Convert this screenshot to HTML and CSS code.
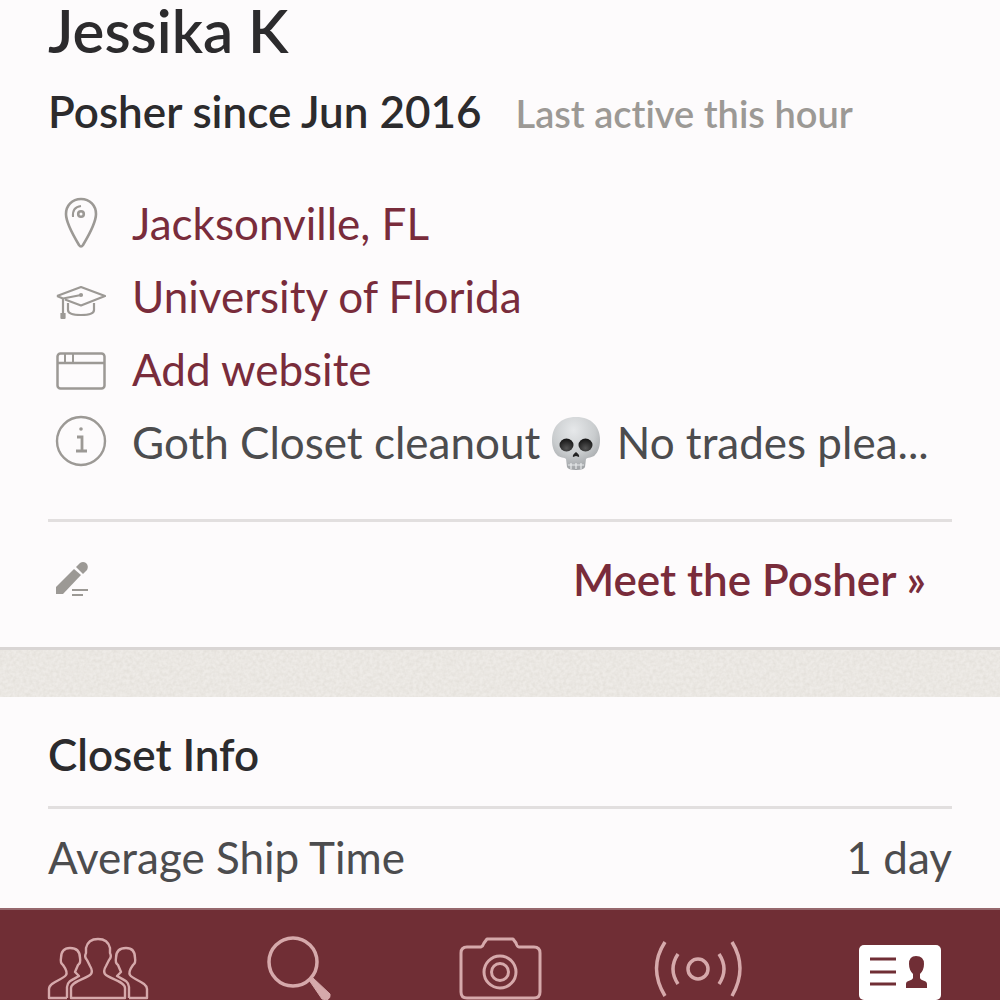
FILE: index.html
```html
<!DOCTYPE html>
<html lang="en">
<head>
    <meta charset="UTF-8">
    <meta name="viewport" content="width=device-width, initial-scale=1.0">
    <title>Jessika K</title>
    <link rel="stylesheet" href="styles.css">
</head>
<body>

    <main>
        <section class="profile">
            <h1>Jessika K</h1>
            <div class="since">
                <h2>Posher since Jun 2016</h2>
                <span class="active">Last active this hour</span>
            </div>

            <ul class="details">
                <li>
                    <svg class="icon" viewBox="0 0 66 60" fill="none" stroke="#9c9995" stroke-width="2.600">
                        <path d="M33 6C24 6 18 12.500 18 21C18 30 25 42 31 52Q33 55 35 52C41 42 48 30 48 21C48 12.500 42 6 33 6Z"/>
                        <circle cx="33" cy="21" r="2.800"/>
                        <path d="M25 24Q24 14 33 13" stroke-width="2"/>
                    </svg>
                    <a href="#">Jacksonville, FL</a>
                </li>
                <li>
                    <svg class="icon" viewBox="0 0 66 60" fill="none" stroke="#9c9995" stroke-width="2.200" stroke-linejoin="round">
                        <path d="M9 30L33 21L57 30L33 39.500L17 33.500M9 30L15 32.500L33 29"/>
                        <path d="M15 32V51M13.500 47V52H16.500V47"/>
                        <path d="M20 37V44Q20 49 33 49Q46 49 46 44V37"/>
                        <circle cx="33" cy="29" r="1"/>
                    </svg>
                    <a href="#">University of Florida</a>
                </li>
                <li>
                    <svg class="icon" viewBox="0 0 66 60" fill="none" stroke="#9c9995" stroke-width="2.500">
                        <rect x="9.500" y="14.500" width="47" height="35" rx="3"/>
                        <path d="M9 24H57"/>
                        <path d="M17 15V24M25 15V24" stroke-width="2"/>
                    </svg>
                    <a href="#">Add website</a>
                </li>
                <li>
                    <svg class="icon" viewBox="0 0 66 60" fill="none" stroke="#9c9995" stroke-width="2.400">
                        <circle cx="33" cy="29" r="24"/>
                        <path d="M29 25H34V39M28 39H39" stroke-width="2.800"/>
                        <circle cx="33" cy="17" r="1.800" fill="#9c9995" stroke="none"/>
                    </svg>
                    <p class="bio">Goth Closet cleanout
                        <svg class="skull" viewBox="0 0 54 56">
                            <defs>
                                <radialGradient id="bone" cx=".45" cy=".25" r=".75">
                                    <stop offset="0" stop-color="#e6e8ea"/>
                                    <stop offset=".6" stop-color="#c9ccce"/>
                                    <stop offset="1" stop-color="#9fa2a5"/>
                                </radialGradient>
                                <radialGradient id="socket" cx=".5" cy=".75" r=".7">
                                    <stop offset="0" stop-color="#555"/>
                                    <stop offset="1" stop-color="#171717"/>
                                </radialGradient>
                            </defs>
                            <path d="M25 2C9 2 1 12 1 25C1 32 3 37 6 40C8 43 14 42 15 44L16 52Q17 55 25 55Q33 55 34 52L35 44C36 42 42 43 44 40C47 37 49 32 49 25C49 12 41 2 25 2Z" fill="url(#bone)"/>
                            <ellipse cx="15.500" cy="30" rx="7" ry="6.500" fill="url(#socket)"/>
                            <ellipse cx="34.500" cy="30" rx="7" ry="6.500" fill="url(#socket)"/>
                            <path d="M25 37Q21 40 22 42L25 41L28 42Q29 40 25 37Z" fill="#222"/>
                            <path d="M17 50H33M20 48V54M25 48V54M30 48V54" stroke="#e8eaec" stroke-width="1.200"/>
                        </svg>
                        No trades plea...</p>
                </li>
            </ul>

            <div class="actions">
                <button class="edit" aria-label="Edit profile">
                    <svg viewBox="0 0 34 36" fill="#9c9995">
                        <path d="M0 26L18 8L25 14L7 33H0Z"/>
                        <path d="M20 6L24 2Q27 0 30 2Q33 5 31 9L27 13Z"/>
                        <path d="M16 28H32V30H16ZM16 33H27V35H16Z"/>
                    </svg>
                </button>
                <a class="meet" href="#">Meet the Posher »</a>
            </div>
        </section>

        <div class="paper">
            <svg width="100%" height="100%">
                <filter id="grain">
                    <feTurbulence type="fractalNoise" baseFrequency="0.3" numOctaves="2"/>
                    <feColorMatrix values="0 0 0 0 .5  0 0 0 0 .47  0 0 0 0 .4  .35 0 0 0 -.1"/>
                </filter>
                <rect width="100%" height="100%" filter="url(#grain)"/>
            </svg>
        </div>

        <section class="closet">
            <h2>Closet Info</h2>
            <dl>
                <dt>Average Ship Time</dt>
                <dd>1 day</dd>
            </dl>
        </section>
    </main>

    <nav class="tabs">
        <a href="#" aria-label="Feed">
            <svg viewBox="0 0 110 66" fill="none" stroke="#d6a9ab" stroke-width="2.400" stroke-linejoin="round">
                <path d="M26 62V52C26 45 42 43 46 38Q48 35 45 30L42 24Q39 21 41 17V12Q43 3 53 3Q63 3 65 12V17Q67 21 64 24L61 30Q58 35 60 38C64 43 80 45 80 52V62Z"/>
                <path d="M22 62V51C22 45 29 43 34 40L30 36L33 29Q36 27 35 22Q35 12 25 12Q16 12 16 22Q15 27 18 29Q23 36 21 39C18 44 4 46 4 53V62H22"/>
                <path d="M84 62V51C84 45 77 43 72 40L76 36L73 29Q70 27 71 22Q71 12 81 12Q90 12 90 22Q91 27 88 29Q83 36 85 39C88 44 102 46 102 53V62H84"/>
            </svg>
        </a>
        <a href="#" aria-label="Search">
            <svg viewBox="0 0 110 66" fill="none" stroke="#d6a9ab">
                <circle cx="48" cy="26" r="24" stroke-width="3.500"/>
                <path d="M64 44L68 42L85 58Q86 62 82 64L77 63Z" fill="#d6a9ab"/>
            </svg>
        </a>
        <a href="#" aria-label="Sell">
            <svg viewBox="0 0 110 66" fill="none" stroke="#d6a9ab" stroke-width="3" stroke-linejoin="round">
                <path d="M16 17Q16 11 22 11H36Q38 10 39 7L42 3H68L71 7Q72 11 74 11H89Q95 11 95 17V56Q95 62 89 62H22Q16 62 16 56Z"/>
                <circle cx="55" cy="36" r="16"/>
                <circle cx="55" cy="36" r="8.500"/>
            </svg>
        </a>
        <a href="#" aria-label="News">
            <svg viewBox="0 0 110 66" fill="none" stroke="#d6a9ab" stroke-width="3.500">
                <circle cx="53" cy="33" r="10"/>
                <path d="M33 18Q23 33 33 48M74 18Q84 33 74 48"/>
                <path d="M20 6Q3 32 20 60M87 6Q103 32 87 60"/>
            </svg>
        </a>
        <a href="#" aria-label="Account">
            <svg viewBox="0 0 110 66">
                <rect x="14" y="9" width="82" height="55" rx="5" fill="#fff"/>
                <path d="M25 23H51M25 36H51M25 48H51" stroke="#702e35" stroke-width="3"/>
                <path d="M71 20Q79 20 79 28Q79 34 75 38V42C76 45 82 44 82 48V52H61V48C61 44 67 45 68 42V38Q64 34 64 28Q64 20 71 20Z" fill="#702e35"/>
            </svg>
        </a>
    </nav>

</body>
</html>
```
FILE: styles.css
```css
* {
    box-sizing: border-box;
}
body {
    margin: 0;
    background: #fdfbfc;
    color: #4c4c4e;
    font-family: Lato, "Open Sans", sans-serif;
    font-size: 44px;
    font-variant-ligatures: none;
    line-height: 48px;
}
main {
    padding-bottom: 92px;
}
h1, h2, p, ul, dl, dd {
    margin: 0;
    padding: 0;
}
h1, h2 {
    color: #2c2b2d;
    font-size: 44px;
    font-weight: 600;
}
h1 {
    font-size: 60px;
    line-height: 60px;
}
a {
    color: #792c3b;
    text-decoration: none;
}
.profile {
    padding: 0 48px;
    border-bottom: 3px solid #d9d5d4;
}
.since {
    display: flex;
    align-items: baseline;
    gap: 34px;
    margin-top: 27px;
}
.active {
    color: #9c9995;
    font-size: 38px;
    font-weight: 600;
}
.details {
    margin-top: 49px;
    list-style: none;
}
.details li {
    display: flex;
    align-items: center;
    gap: 18px;
    height: 73px;
}
.icon {
    flex: none;
    width: 66px;
    height: 60px;
}
.bio {
    white-space: nowrap;
}
.skull {
    width: 54px;
    height: 56px;
    margin: -8px 0;
    vertical-align: -4px;
}
.actions {
    display: flex;
    align-items: center;
    justify-content: space-between;
    margin-top: 41px;
    padding: 33px 26px 44px 8px;
    border-top: 3px solid #e2dfdf;
}
.edit {
    padding: 0;
    border: 0;
    background: none;
}
.edit svg {
    display: block;
    width: 34px;
    height: 36px;
}
.meet {
    font-weight: 600;
}
.paper {
    height: 47px;
    background: #eeebe7;
}
.paper svg {
    display: block;
}
.closet {
    padding: 33px 48px 26px;
}
.closet dl {
    display: flex;
    justify-content: space-between;
    margin-top: 28px;
    padding-top: 24px;
    border-top: 3px solid #e2dfdf;
}
.tabs {
    position: fixed;
    right: 0;
    bottom: 0;
    left: 0;
    display: grid;
    grid-template-columns: repeat(5, 1fr);
    justify-items: center;
    height: 92px;
    padding-top: 26px;
    border-top: 2px solid #96686d;
    background: #702e35;
}
.tabs svg {
    display: block;
    width: 110px;
    height: 66px;
}
```
